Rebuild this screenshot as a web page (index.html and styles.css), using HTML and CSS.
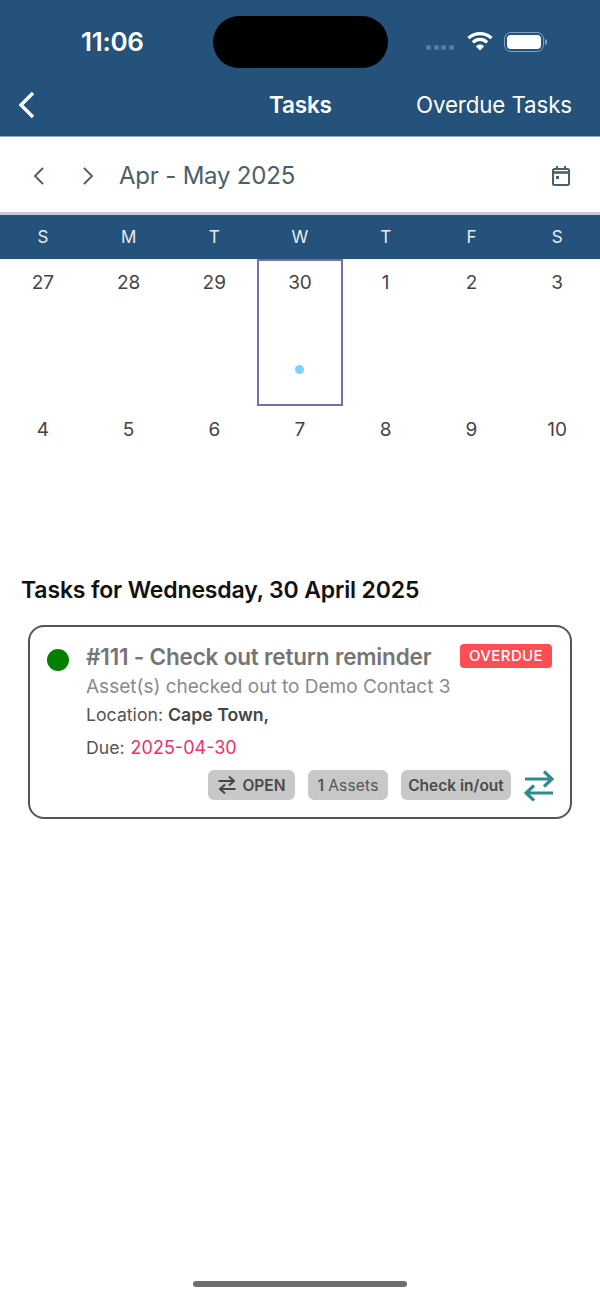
FILE: index.html
```html
<!DOCTYPE html>
<html lang="en">
<head>
  <meta charset="UTF-8" />
  <title>Tasks</title>
  <link rel="stylesheet" href="styles.css">
</head>
<body>
  <div class="app">
    <header class="topbar">
      <div class="status">
        <div class="time">11:06</div>
        <div class="island"></div>
        <div class="status-icons">
          <div class="signal"><i></i><i></i><i></i><i></i></div>
          <svg class="wifi" width="28" height="22" viewBox="0 0 28 22">
            <path d="M2.5 8.2C9 2 19 2 25.5 8.2M6.8 12.4C11 8.4 17 8.4 21.2 12.4" fill="none" stroke="#fff" stroke-width="3.2"/>
            <path d="M14 20.6L9.8 16.2C12.2 14 15.8 14 18.2 16.2Z" fill="#fff"/>
          </svg>
          <div class="battery"><div class="battery-fill"></div></div>
          <div class="battery-tip"></div>
        </div>
      </div>
      <div class="nav">
        <svg class="back" width="20" height="28" viewBox="0 0 20 28">
          <path d="M16 2L4 14L16 26" fill="none" stroke="#fff" stroke-width="3.4"/>
        </svg>
        <div class="nav-title">Tasks</div>
        <div class="nav-link">Overdue Tasks</div>
      </div>
    </header>

    <div class="toolbar">
      <svg class="chev" width="14" height="20" viewBox="0 0 14 20"><path d="M11 2L3 10L11 18" fill="none" stroke="#4b5f6b" stroke-width="1.9"/></svg>
      <svg class="chev chev-next" width="14" height="20" viewBox="0 0 14 20"><path d="M3 2L11 10L3 18" fill="none" stroke="#4b5f6b" stroke-width="1.9"/></svg>
      <div class="range">Apr - May 2025</div>
      <svg class="cal" width="20" height="24" viewBox="0 0 20 24">
        <rect x="2" y="5" width="16" height="16" rx="1.5" fill="none" stroke="#4b5f6b" stroke-width="2"/>
        <path d="M2 8.5H18" stroke="#4b5f6b" stroke-width="2.6"/>
        <path d="M6 2V6M14 2V6" stroke="#4b5f6b" stroke-width="2"/>
        <rect x="5" y="12" width="3" height="3" fill="#4b5f6b"/>
      </svg>
    </div>

    <div class="weekdays">
      <div>S</div><div>M</div><div>T</div><div>W</div><div>T</div><div>F</div><div>S</div>
    </div>

    <div class="month">
      <div class="day">27</div>
      <div class="day">28</div>
      <div class="day">29</div>
      <div class="day selected">30<span class="dot"></span></div>
      <div class="day">1</div>
      <div class="day">2</div>
      <div class="day">3</div>
      <div class="day">4</div>
      <div class="day">5</div>
      <div class="day">6</div>
      <div class="day">7</div>
      <div class="day">8</div>
      <div class="day">9</div>
      <div class="day">10</div>
    </div>

    <h2 class="list-title">Tasks for Wednesday, 30 April 2025</h2>

    <div class="card">
      <div class="card-top">
        <div class="status-dot"></div>
        <div class="card-body">
          <div class="title-row">
            <div class="card-title">#111 - Check out return reminder</div>
            <div class="overdue">OVERDUE</div>
          </div>
          <div class="subtitle">Asset(s) checked out to Demo Contact 3</div>
          <div class="meta">Location: <b>Cape Town,</b></div>
          <div class="meta due">Due: <span class="due-date">2025-04-30</span></div>
        </div>
      </div>
      <div class="actions">
        <div class="chip chip-open">
          <svg width="20" height="20" viewBox="0 0 20 20"><path d="M1.5 6H17M12 1.5L17 6L12 10.5M18.5 14H3M8 9.5L3 14L8 18.5" fill="none" stroke="#444" stroke-width="2"/></svg>
          OPEN
        </div>
        <div class="chip chip-assets"><b>1</b> Assets</div>
        <div class="chip chip-check">Check in/out</div>
        <svg class="swap" width="30" height="32" viewBox="0 0 30 32"><path d="M1 10H28M20 2.5L28 10L20 17.5M29 24H2M10 16.5L2 24L10 31.5" fill="none" stroke="#2e8b8f" stroke-width="3.2"/></svg>
      </div>
    </div>

    <div class="home-bar"></div>
  </div>
</body>
</html>
```

FILE: styles.css
```css
* {
  margin: 0;
  padding: 0;
  box-sizing: border-box;
}
body {
  background: #fff;
  font-family: Inter, "Liberation Sans", sans-serif;
  color: #444;
}
.app {
  width: 600px;
  height: 1299px;
  display: flex;
  flex-direction: column;
  overflow: hidden;
}
/* Top bar */
.topbar {
  height: 137px;
  background: #24527a;
  border-bottom: 1px solid #9aa3c4;
  color: #fff;
}
.status {
  height: 83px;
  display: flex;
  align-items: center;
}
.time {
  width: 213px;
  padding-left: 81px;
  font-size: 26px;
  font-weight: 600;
  letter-spacing: -0.3px;
}
.island {
  width: 175px;
  height: 52px;
  background: #000;
  border-radius: 26px;
}
.status-icons {
  display: flex;
  align-items: center;
  padding-left: 38px;
}
.signal {
  display: flex;
  gap: 2.5px;
  margin-top: 12px;
}
.signal i {
  width: 5px;
  height: 5px;
  border-radius: 50%;
  background: #5d7f9e;
}
.wifi {
  margin: -2px 0 0 12px;
}
.battery {
  width: 40px;
  height: 20px;
  margin-left: 10px;
  padding: 2px;
  border: 1.5px solid #7fa0bd;
  border-radius: 7px;
}
.battery-fill {
  height: 100%;
  background: #fff;
  border-radius: 4px;
}
.battery-tip {
  width: 2px;
  height: 6px;
  margin-left: 1px;
  background: #7fa0bd;
  border-radius: 0 2px 2px 0;
}
.nav {
  height: 53px;
  display: flex;
  align-items: center;
  padding: 0 28px 10px 17px;
}
.back {
  flex: none;
}
.nav-title {
  margin-left: 232px;
  font-size: 22.5px;
  font-weight: 600;
  letter-spacing: -0.2px;
}
.nav-link {
  margin-left: auto;
  font-size: 22.3px;
  letter-spacing: -0.1px;
}
/* Month switcher */
.toolbar {
  height: 75px;
  display: flex;
  align-items: center;
  padding: 2px 29px 0 32px;
  color: #4b5f6b;
}
.chev-next {
  margin-left: 35px;
}
.range {
  margin-left: 24px;
  font-size: 24px;
  letter-spacing: -0.2px;
}
.cal {
  margin-left: auto;
}
.weekdays {
  height: 47px;
  display: grid;
  grid-template-columns: repeat(7, 1fr);
  align-items: center;
  background: #24527a;
  border-top: 3px solid #c6cad9;
  color: #e8eef3;
  font-size: 17px;
  text-align: center;
}
/* Calendar */
.month {
  display: grid;
  grid-template-columns: repeat(7, 1fr);
  grid-auto-rows: 147px;
}
.day {
  position: relative;
  padding-top: 12px;
  font-size: 19px;
  text-align: center;
  color: #444;
}
.selected {
  border: 2px solid #7a6cb0;
  padding-top: 10px;
}
.dot {
  position: absolute;
  left: 36px;
  top: 104px;
  width: 9px;
  height: 9px;
  border-radius: 50%;
  background: #7dd3fc;
}
.list-title {
  margin: 22px 0 0 21px;
  font-size: 23px;
  font-weight: 600;
  line-height: 30px;
  letter-spacing: -0.15px;
  color: #111;
}
/* Task card */
.card {
  width: 544px;
  height: 194px;
  margin: 20px 0 0 28px;
  padding: 15px 16px 0 17px;
  border: 2px solid #555;
  border-radius: 16px;
}
.card-top {
  display: flex;
}
.status-dot {
  flex: none;
  width: 22px;
  height: 22px;
  margin-top: 7px;
  border-radius: 50%;
  background: #008000;
}
.card-body {
  flex: 1;
  margin-left: 17px;
}
.title-row {
  display: flex;
  justify-content: space-between;
  align-items: center;
  height: 28px;
  padding-right: 2px;
}
.card-title {
  font-size: 22.5px;
  font-weight: 600;
  letter-spacing: -0.18px;
  color: #757575;
}
.overdue {
  width: 92px;
  height: 24px;
  background: #ff4d54;
  border-radius: 4px;
  color: #fff;
  font-size: 15px;
  font-weight: 500;
  line-height: 24px;
  text-align: center;
  letter-spacing: 0.4px;
}
.subtitle {
  margin-top: 4px;
  font-size: 19px;
  line-height: 26px;
  color: #8a8a8a;
}
.meta {
  margin-top: 3px;
  font-size: 17.7px;
  line-height: 24px;
  color: #555;
}
.meta b {
  font-weight: 600;
  color: #444;
}
.due {
  margin-top: 9px;
}
.due-date {
  margin-left: 1px;
  font-size: 18px;
  color: #f0306a;
}
.actions {
  display: flex;
  align-items: center;
  margin-top: 9px;
}
.chip {
  height: 30px;
  display: flex;
  align-items: center;
  justify-content: center;
  background: #c8c8c8;
  border-radius: 6px;
  font-size: 15.5px;
  font-weight: 600;
  color: #4a4a4a;
}
.chip-open {
  width: 87px;
  margin-left: 161px;
  gap: 5px;
}
.chip-assets {
  width: 80px;
  margin-left: 13px;
  gap: 4px;
  font-weight: 400;
  letter-spacing: 0.2px;
  color: #555;
}
.chip-assets b {
  font-weight: 600;
}
.chip-check {
  width: 110px;
  margin-left: 13px;
}
.swap {
  margin-left: 13px;
}
.home-bar {
  width: 214px;
  height: 6px;
  margin: auto auto 12px;
  background: #6e6e6e;
  border-radius: 3px;
}
```
